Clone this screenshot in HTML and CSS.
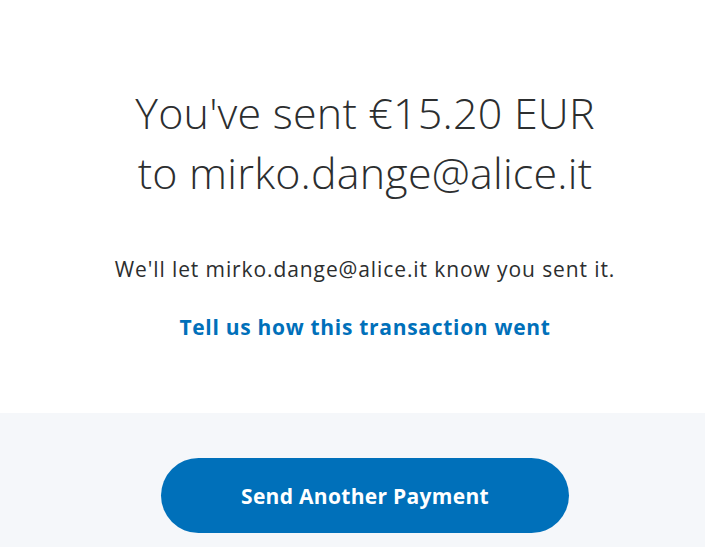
FILE: index.html
```html
<!DOCTYPE html>
<html>
<head>
<meta charset="utf-8">
<link rel="stylesheet" href="styles.css">
</head>
<body>
<main class="page">
  <section class="top">
    <h1 class="headline">You've sent €15.20 EUR<br>to mirko.dange@alice.it</h1>
    <p class="note">We'll let mirko.dange@alice.it know you sent it.</p>
    <a class="feedback" href="#">Tell us how this transaction went</a>
  </section>
  <section class="bottom">
    <button class="send-btn" type="button">Send Another Payment</button>
  </section>
</main>
</body>
</html>
```

FILE: styles.css
```css
html, body {
  margin: 0;
  padding: 0;
  background: #ffffff;
}
body {
  font-family: "Open Sans", "Liberation Sans", sans-serif;
  color: #2c2e2f;
}
.page {
  display: flex;
  flex-direction: column;
  min-height: 547px;
}
.top {
  display: flex;
  flex-direction: column;
  align-items: center;
  text-align: center;
  padding: 83px 0 0 25px;
  height: 413px;
  box-sizing: border-box;
}
.headline {
  margin: 0;
  font-weight: 300;
  font-size: 43px;
  line-height: 60px;
  letter-spacing: 0.2px;
  color: #2c2e2f;
  white-space: nowrap;
}
.note {
  margin: 51px 0 0;
  font-size: 21px;
  line-height: 30px;
  letter-spacing: 0.9px;
  color: #2c2e2f;
  white-space: nowrap;
}
.feedback {
  margin-top: 28px;
  font-size: 21px;
  font-weight: 700;
  line-height: 30px;
  letter-spacing: 0.7px;
  color: #0070ba;
  text-decoration: none;
  white-space: nowrap;
}
.bottom {
  flex: 1;
  background: #f5f7fa;
  display: flex;
  justify-content: center;
  padding: 45px 0 0 25px;
}
.send-btn {
  width: 408px;
  height: 75px;
  border: none;
  border-radius: 38px;
  background: #0070ba;
  color: #ffffff;
  font-family: "Open Sans", "Liberation Sans", sans-serif;
  font-size: 21px;
  font-weight: 700;
  letter-spacing: 0.3px;
}
```
